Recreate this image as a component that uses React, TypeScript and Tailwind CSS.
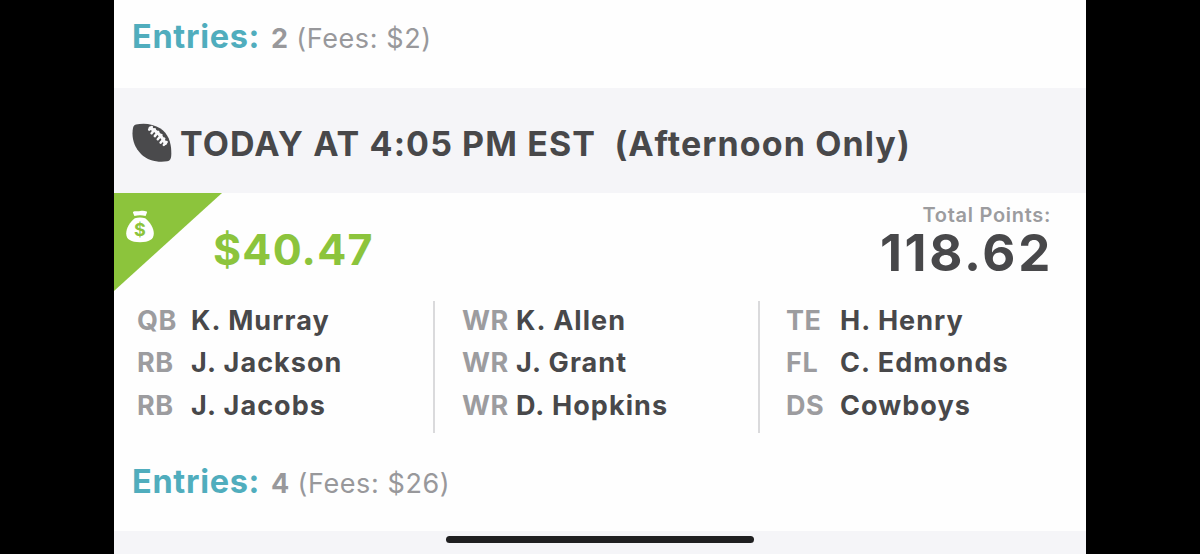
type Player = {
  position: string;
  name: string;
};

const lineup: Player[][] = [
  [
    { position: "QB", name: "K. Murray" },
    { position: "RB", name: "J. Jackson" },
    { position: "RB", name: "J. Jacobs" },
  ],
  [
    { position: "WR", name: "K. Allen" },
    { position: "WR", name: "J. Grant" },
    { position: "WR", name: "D. Hopkins" },
  ],
  [
    { position: "TE", name: "H. Henry" },
    { position: "FL", name: "C. Edmonds" },
    { position: "DS", name: "Cowboys" },
  ],
];

function FootballIcon() {
  return (
    <svg viewBox="0 0 40 40" className="h-10 w-10 shrink-0">
      <path
        d="M4 1.500C11 -.2 21 .4 28.500 5.500c8 5.500 11.500 15 10.700 27.500-.2 3-1.200 4.800-4 5.300C26.500 39.700 16 38 9 31 1.500 23.500-.6 14 1 5c.4-2 1.200-3 3-3.500z"
        fill="#4a4a4c"
      />
      <g stroke="#f8f8fa" strokeLinecap="round" fill="none">
        <path d="M18 5C24 7.500 30 13.500 33.500 20.500" strokeWidth="3" />
        <path
          d="M19.800 4l-2.600 2.600M22.800 6.200l-3.200 4M26.200 8.900l-3.400 4.200M29.400 12l-3.600 4.200M32.200 15.600l-3.600 4M34.600 19l-2.800 2.800"
          strokeWidth="2.500"
        />
      </g>
    </svg>
  );
}

function MoneyBagIcon() {
  return (
    <svg viewBox="0 0 28 33" className="absolute top-[17px] left-[12px] h-[33px] w-7">
      <path
        d="M7.300 1.700c2.300-1.200 4.300 0 6.700-.6 2.400-.6 4.400-.6 6.700.5.600.4.300 1 .1 1.500L19.600 6c-3.500-.9-7.700-.9-11.200 0L7.200 3.200c-.2-.5-.5-1.100.1-1.500z"
        fill="#fff"
      />
      <path
        d="M8.800 8.200c3.200-.9 7.200-.9 10.400 0 4.800 3.600 8.600 9.800 8.600 15.300 0 6-4.800 8.700-13.800 8.700S.2 29.500.2 23.500C.2 18 4 11.800 8.800 8.200z"
        fill="#fff"
      />
      <text x="14" y="26.300" textAnchor="middle" fontFamily="Inter, sans-serif" fontSize="18" fontWeight="700" fill="#8cc43c">
        $
      </text>
    </svg>
  );
}

function Entries({ count, fees }: { count: number; fees: string }) {
  return (
    <div className="flex items-baseline pl-[18px] leading-10 whitespace-pre">
      <span className="w-[139px] text-[32.5px] font-bold tracking-[0.7px] text-[#50adbd]">Entries:</span>
      <span className="text-[27px] text-[#98989b]">
        <b className="font-bold">{count}</b>
        <span className="tracking-[0.6px]"> (Fees: {fees})</span>
      </span>
    </div>
  );
}

function LineupColumn({ players, className }: { players: Player[]; className: string }) {
  return (
    <div className={className}>
      {players.map((player, i) => (
        <div key={i} className="-mt-px mb-px flex h-[42.4px] items-center text-[27px] font-bold">
          <span className="w-[54px] shrink-0 tracking-[0.6px] text-[#9c9c9f]">{player.position}</span>
          <span className="tracking-[1.05px] text-[#48484a]">{player.name}</span>
        </div>
      ))}
    </div>
  );
}

export default function App() {
  return (
    <div className="flex h-[554px] w-[1200px] justify-center overflow-hidden bg-black font-['Inter',sans-serif]">
      <main className="relative flex w-[972px] flex-col bg-[#f5f5f8]">
        <section className="h-[88px] bg-[#fefefe] pt-[17px]">
          <Entries count={2} fees="$2" />
        </section>

        <header className="flex h-[105px] items-center gap-[8px] pt-[5px] pl-[18px] whitespace-pre">
          <FootballIcon />
          <h1 className="text-[34px] font-bold tracking-[1.1px] text-[#48484a]">
            {"TODAY AT 4:05 PM EST  (Afternoon Only)"}
          </h1>
        </header>

        <section className="relative h-[338px] bg-[#fefefe]">
          <div className="absolute top-0 left-0 h-[98px] w-[108px] bg-[#8cc43c] [clip-path:polygon(0_0,100%_0,0_100%)]" />
          <MoneyBagIcon />

          <div className="flex h-[108px] justify-between pr-[33px] pl-[99px]">
            <div className="pt-[31px] text-[43px] leading-[50px] font-bold tracking-[1.2px] text-[#8cc43c]">$40.47</div>
            <div className="flex flex-col items-end pt-[10px]">
              <span className="mr-[2px] text-[20px] leading-6 font-semibold tracking-[0.7px] text-[#9c9c9f]">
                Total Points:
              </span>
              <span className="text-[51px] leading-[51px] font-bold tracking-[2.7px] text-[#48484a]">118.62</span>
            </div>
          </div>

          <div className="flex h-[132px]">
            <LineupColumn players={lineup[0]} className="w-[321px] border-r-2 border-[#dadadc] pl-[23px]" />
            <LineupColumn players={lineup[1]} className="w-[325px] border-r-2 border-[#dadadc] pl-[27px]" />
            <LineupColumn players={lineup[2]} className="flex-1 pl-[26px]" />
          </div>

          <div className="pt-[29px]">
            <Entries count={4} fees="$26" />
          </div>
        </section>

        <div className="absolute bottom-[11px] left-[332px] h-[7px] w-[308px] rounded-full bg-[#1f1f20]" />
      </main>
    </div>
  );
}
